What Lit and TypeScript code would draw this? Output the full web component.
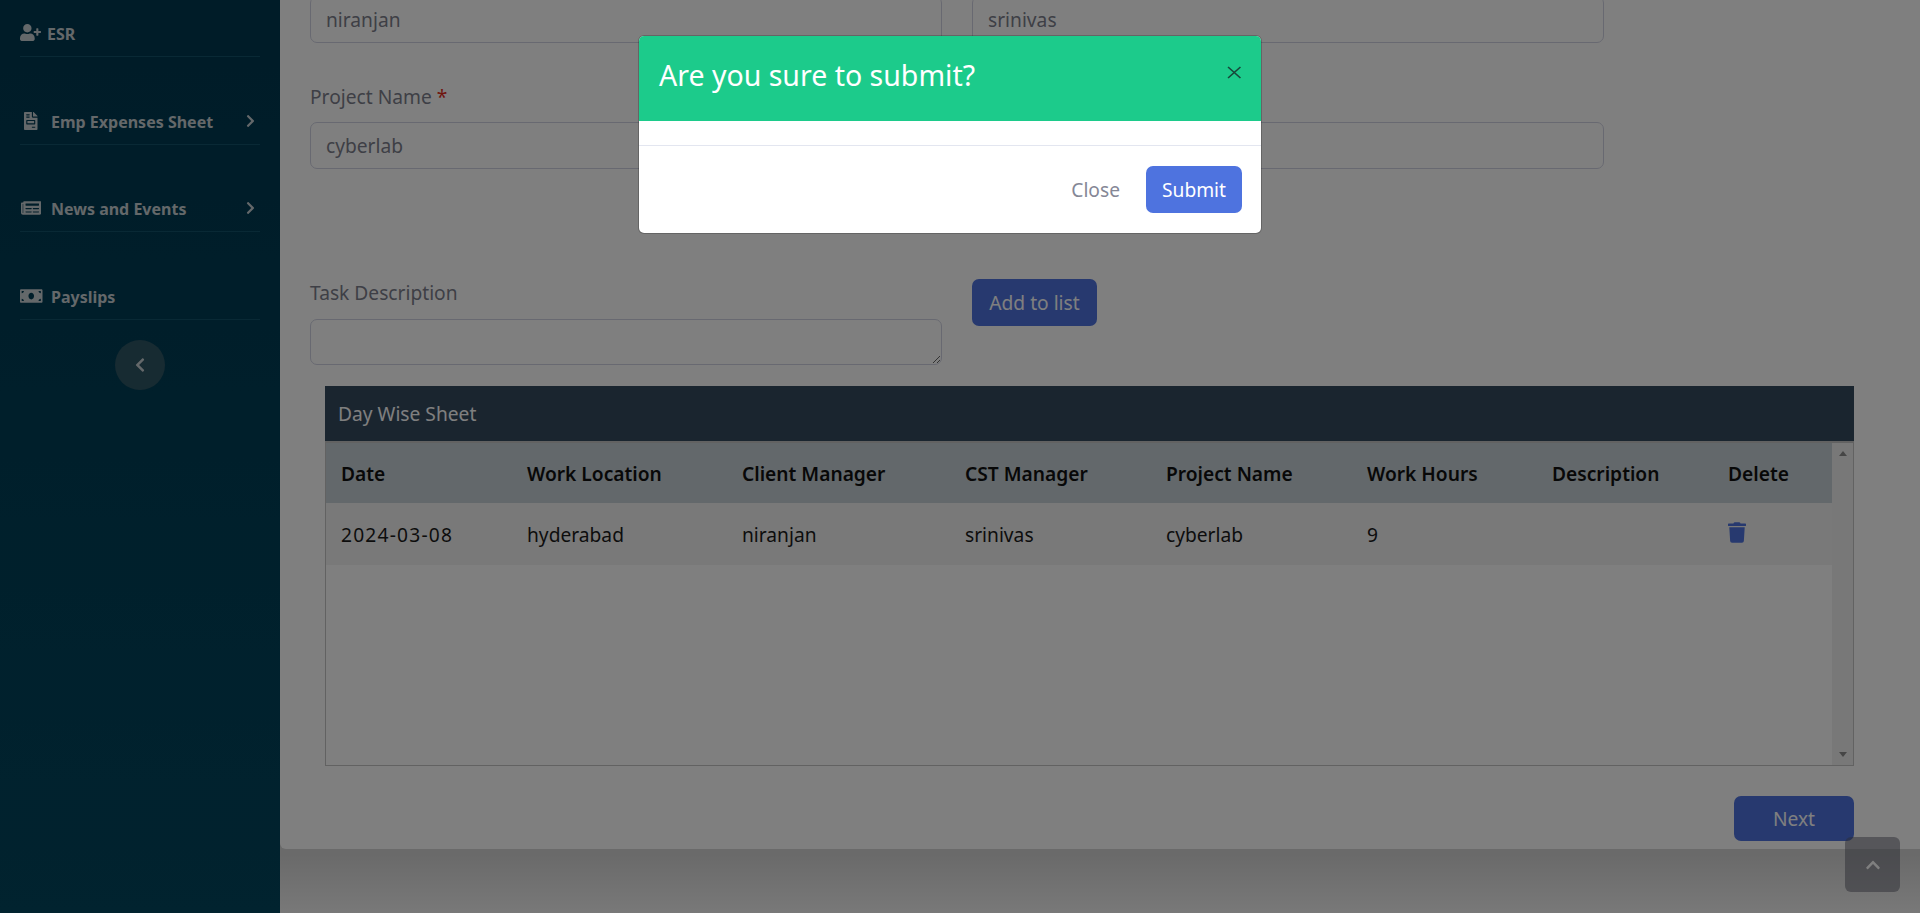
import { LitElement, html, css, svg } from 'lit';
import { customElement } from 'lit/decorators.js';

const chevron = svg`<path d="M285.476 272.971L91.132 467.314c-9.373 9.373-24.569 9.373-33.941 0l-22.667-22.667c-9.357-9.357-9.375-24.522-.04-33.901L188.505 256 34.484 101.255c-9.335-9.379-9.317-24.544.04-33.901l22.667-22.667c9.373-9.373 24.569-9.373 33.941 0L285.475 239.030c9.373 9.372 9.373 24.568.001 33.941z" fill="currentColor"/>`;

const columns = ['Date', 'Work Location', 'Client Manager', 'CST Manager', 'Project Name', 'Work Hours', 'Description', 'Delete'];
const row = ['2024-03-08', 'hyderabad', 'niranjan', 'srinivas', 'cyberlab', '9', ''];

@customElement('app-root')
export class AppRoot extends LitElement {
  static styles = css`
    :host {
      display: block;
      height: 913px;
      overflow: hidden;
      position: relative;
      font-family: 'Noto Sans', 'Open Sans', sans-serif;
      font-size: 19.2px;
      color: #3a3b45;
    }

    .layout {
      display: flex;
      height: 913px;
    }

    /* sidebar */
    .sidebar {
      width: 280px;
      flex: none;
      padding: 0 20px;
      box-sizing: border-box;
      background: linear-gradient(#003850, #02465e);
      color: #c8d0d4;
      font-size: 16px;
      font-weight: 700;
    }
    .nav-item {
      display: flex;
      align-items: center;
      box-sizing: border-box;
      height: 88px;
      padding-top: 43px;
      line-height: 22px;
      border-bottom: 1px solid #12526a;
    }
    .nav-item.first {
      height: 57px;
      padding-top: 12px;
    }
    .nav-item.short {
      height: 87px;
      padding-top: 42px;
    }
    .nav-item .icon {
      height: 18px;
      flex: none;
      margin-bottom: 3px;
    }
    .icon.user {
      width: 21px;
      height: 17px;
      margin-right: 6px;
    }
    .icon.invoice {
      width: 13.5px;
      margin-left: 4px;
      margin-right: 13.5px;
    }
    .icon.news {
      width: 20.25px;
      margin-left: 1px;
      margin-right: 9.75px;
    }
    .icon.bill {
      width: 22.5px;
      margin-right: 8.5px;
    }
    .nav-item .arrow {
      width: 9px;
      height: 14px;
      margin-left: auto;
      margin-right: 5px;
      margin-bottom: 3px;
    }
    .toggle {
      display: flex;
      align-items: center;
      justify-content: center;
      width: 50px;
      height: 50px;
      margin: 20px auto 0;
      border-radius: 50%;
      background: #2f5664;
    }
    .toggle svg {
      width: 10px;
      height: 16px;
      transform: rotate(180deg);
    }

    /* main card */
    .main {
      flex: 1;
      min-width: 0;
      background: linear-gradient(to top, #f2f2f2, #d4d4d4 60px);
    }
    .card {
      height: 853px;
      background: #fff;
      border-radius: 0 0 0 6px;
      padding: 0 30px;
      box-sizing: border-box;
    }
    .fields {
      display: grid;
      grid-template-columns: 632px 632px;
      column-gap: 30px;
      margin-top: -4px;
    }
    .field label {
      display: block;
      margin-bottom: 12px;
      line-height: 26px;
      color: #7d7f8c;
    }
    .req {
      color: #e02d1b;
    }
    .input {
      height: 47px;
      box-sizing: border-box;
      border: 1px solid #d1d3e2;
      border-radius: 7px;
      padding: 0 15px;
      line-height: 45px;
      color: #7d7f8c;
    }
    .row-two {
      margin-top: 41px;
    }
    .task {
      display: grid;
      grid-template-columns: 632px auto;
      column-gap: 30px;
      align-items: start;
      margin-top: 110px;
    }
    .task .field {
      padding-top: 1px;
    }
    .task label {
      margin-bottom: 13px;
    }
    .task textarea {
      display: block;
      width: 100%;
      height: 46px;
      box-sizing: border-box;
      border: 1px solid #d1d3e2;
      border-radius: 7px;
      background: #fff;
      resize: vertical;
      margin: 0;
    }
    .btn {
      font: inherit;
      height: 47px;
      border: none;
      border-radius: 7px;
      background: #4e73df;
      color: #fff;
      padding: 0;
    }
    .add {
      justify-self: start;
      width: 125px;
    }
    .submit {
      width: 96px;
    }

    /* sheet */
    .sheet {
      margin: 21px 36px 0 15px;
    }
    .sheet-title {
      height: 55px;
      background: #344a5f;
      color: #fff;
      line-height: 55px;
      padding: 0 13px;
      box-sizing: border-box;
    }
    .sheet-body {
      display: flex;
      height: 325px;
      box-sizing: border-box;
      border: 1px solid #c4c4c4;
      border-top-width: 2px;
    }
    .grid {
      flex: 1;
      min-width: 0;
    }
    .grid-row {
      display: grid;
      grid-template-columns: 186px 215px 223px 201px 201px 185px 176px auto;
      align-items: center;
      padding: 0 15px;
    }
    .grid-row.head {
      height: 60px;
      background: #c6d0d6;
      color: #111;
      font-weight: 600;
    }
    .grid-row.body {
      height: 62px;
      background: #f2f2f2;
      color: #1b1b1b;
    }
    .date {
      letter-spacing: 1.2px;
    }
    .trash {
      width: 18px;
      height: 21px;
      margin-bottom: 3px;
    }
    .scrollbar {
      width: 21px;
      flex: none;
      background: #f1f1f1;
      display: flex;
      flex-direction: column;
      justify-content: space-between;
      align-items: center;
      padding: 8px 0;
      box-sizing: border-box;
    }
    .scrollbar i {
      width: 0;
      height: 0;
      border-left: 4.5px solid transparent;
      border-right: 4.5px solid transparent;
    }
    .scrollbar i.up {
      border-bottom: 5px solid #8c8c8c;
    }
    .scrollbar i.down {
      border-top: 5px solid #8c8c8c;
    }
    .next-row {
      display: flex;
      justify-content: flex-end;
      margin: 30px 36px 0 0;
    }
    .next {
      width: 120px;
      height: 45px;
    }

    /* overlays */
    .to-top {
      position: absolute;
      right: 20px;
      bottom: 21px;
      width: 55px;
      height: 55px;
      border-radius: 6px;
      background: rgba(90, 92, 105, 0.5);
      display: flex;
      align-items: center;
      justify-content: center;
      color: #fff;
    }
    .to-top svg {
      width: 10px;
      height: 16px;
      transform: rotate(-90deg);
    }
    .backdrop {
      position: absolute;
      inset: 0;
      background: rgba(0, 0, 0, 0.5);
    }
    .modal {
      position: absolute;
      left: 638px;
      top: 35px;
      width: 624px;
      border-radius: 6px;
      background: #fff;
      background-clip: padding-box;
      border: 1px solid rgba(0, 0, 0, 0.2);
      box-sizing: border-box;
    }
    .modal-head {
      height: 85px;
      background: #1ccb8b;
      border-radius: 5px 5px 0 0;
      display: flex;
      justify-content: space-between;
      padding: 0 20px;
      color: #fff;
    }
    .modal-head h5 {
      margin: 0;
      font-size: 28.500px;
      font-weight: 400;
      line-height: 79px;
    }
    .modal-head svg {
      width: 14.500px;
      height: 13px;
      margin-top: 30px;
    }
    .modal-body {
      height: 24px;
      border-bottom: 1px solid #e3e6f0;
    }
    .modal-foot {
      display: flex;
      justify-content: flex-end;
      align-items: center;
      gap: 26px;
      height: 87px;
      padding: 0 19px;
    }
    .modal-foot span {
      color: #858796;
    }
  `;

  render() {
    return html`
      <div class="layout">
        <aside class="sidebar">
          <div class="nav-item first">
            <svg class="icon user" viewBox="0 0 640 512"><path fill="currentColor" d="M624 208h-64v-64c0-8.800-7.200-16-16-16h-32c-8.800 0-16 7.200-16 16v64h-64c-8.800 0-16 7.200-16 16v32c0 8.800 7.200 16 16 16h64v64c0 8.800 7.200 16 16 16h32c8.800 0 16-7.200 16-16v-64h64c8.800 0 16-7.200 16-16v-32c0-8.800-7.200-16-16-16zm-400 48c70.700 0 128-57.300 128-128S294.700 0 224 0 96 57.300 96 128s57.300 128 128 128zm89.600 32h-16.700c-22.200 10.200-46.900 16-72.900 16s-50.600-5.800-72.900-16h-16.700C60.200 288 0 348.200 0 422.400V464c0 26.500 21.500 48 48 48h352c26.500 0 48-21.500 48-48v-41.600c0-74.200-60.200-134.400-134.400-134.400z"/></svg>
            <span>ESR</span>
          </div>
          <div class="nav-item">
            <svg class="icon invoice" viewBox="0 0 384 512"><path fill="currentColor" d="M288 256H96v64h192v-64zm89-151L279.100 7c-4.500-4.500-10.600-7-17-7H256v128h128v-6.100c0-6.300-2.500-12.400-7-16.900zm-153 31V0H24C10.700 0 0 10.700 0 24v464c0 13.300 10.700 24 24 24h336c13.300 0 24-10.700 24-24V160H248c-13.200 0-24-10.800-24-24zM64 72c0-4.420 3.580-8 8-8h80c4.420 0 8 3.580 8 8v16c0 4.420-3.580 8-8 8H72c-4.420 0-8-3.580-8-8V72zm0 64c0-4.420 3.580-8 8-8h80c4.420 0 8 3.580 8 8v16c0 4.420-3.580 8-8 8H72c-4.420 0-8-3.580-8-8v-16zm256 304c0 4.420-3.580 8-8 8h-80c-4.420 0-8-3.580-8-8v-16c0-4.420 3.580-8 8-8h80c4.420 0 8 3.580 8 8v16zm0-200v96c0 8.840-7.160 16-16 16H80c-8.840 0-16-7.160-16-16v-96c0-8.840 7.160-16 16-16h224c8.840 0 16 7.160 16 16z"/></svg>
            <span>Emp Expenses Sheet</span>
            <svg class="arrow" viewBox="0 0 320 512">${chevron}</svg>
          </div>
          <div class="nav-item short">
            <svg class="icon news" viewBox="0 0 576 512"><path fill="currentColor" d="M552 64H88c-13.255 0-24 10.745-24 24v8H24c-13.255 0-24 10.745-24 24v272c0 30.928 25.072 56 56 56h472c26.510 0 48-21.490 48-48V88c0-13.255-10.745-24-24-24zM56 400a8 8 0 0 1-8-8V144h16v248a8 8 0 0 1-8 8zm236-16H140c-6.627 0-12-5.373-12-12v-8c0-6.627 5.373-12 12-12h152c6.627 0 12 5.373 12 12v8c0 6.627-5.373 12-12 12zm208 0H348c-6.627 0-12-5.373-12-12v-8c0-6.627 5.373-12 12-12h152c6.627 0 12 5.373 12 12v8c0 6.627-5.373 12-12 12zm-208-96H140c-6.627 0-12-5.373-12-12v-8c0-6.627 5.373-12 12-12h152c6.627 0 12 5.373 12 12v8c0 6.627-5.373 12-12 12zm208 0H348c-6.627 0-12-5.373-12-12v-8c0-6.627 5.373-12 12-12h152c6.627 0 12 5.373 12 12v8c0 6.627-5.373 12-12 12zm0-96H140c-6.627 0-12-5.373-12-12v-40c0-6.627 5.373-12 12-12h360c6.627 0 12 5.373 12 12v40c0 6.627-5.373 12-12 12z"/></svg>
            <span>News and Events</span>
            <svg class="arrow" viewBox="0 0 320 512">${chevron}</svg>
          </div>
          <div class="nav-item">
            <svg class="icon bill" viewBox="0 0 640 512"><path fill="currentColor" d="M608 64H32C14.330 64 0 78.330 0 96v320c0 17.670 14.330 32 32 32h576c17.670 0 32-14.330 32-32V96c0-17.670-14.330-32-32-32zM48 400v-64c35.350 0 64 28.650 64 64H48zm0-224v-64h64c0 35.350-28.650 64-64 64zm272 176c-44.190 0-80-42.980-80-96 0-53.030 35.820-96 80-96s80 42.970 80 96c0 53.040-35.830 96-80 96zm272 48h-64c0-35.350 28.650-64 64-64v64zm0-224c-35.350 0-64-28.650-64-64h64v64z"/></svg>
            <span>Payslips</span>
          </div>
          <div class="toggle"><svg viewBox="0 0 320 512">${chevron}</svg></div>
        </aside>
        <main class="main">
          <section class="card">
            <div class="fields">
              <div class="field"><div class="input">niranjan</div></div>
              <div class="field"><div class="input">srinivas</div></div>
              <div class="field row-two"><label>Project Name <span class="req">*</span></label><div class="input">cyberlab</div></div>
              <div class="field row-two"><label>&nbsp;</label><div class="input"></div></div>
            </div>
            <div class="task">
              <div class="field"><label>Task Description</label><textarea></textarea></div>
              <button class="btn add">Add to list</button>
            </div>
            <div class="sheet">
              <div class="sheet-title">Day Wise Sheet</div>
              <div class="sheet-body">
                <div class="grid">
                  <div class="grid-row head">${columns.map((c) => html`<div>${c}</div>`)}</div>
                  <div class="grid-row body">
                    ${row.map((c, i) => html`<div class=${i === 0 ? 'date' : ''}>${c}</div>`)}
                    <svg class="trash" viewBox="0 0 448 512"><path fill="#4e73df" d="M432 32H312l-9.400-18.700A24 24 0 0 0 281.100 0H166.800a23.720 23.720 0 0 0-21.400 13.300L136 32H16A16 16 0 0 0 0 48v32a16 16 0 0 0 16 16h416a16 16 0 0 0 16-16V48a16 16 0 0 0-16-16zM53.200 467a48 48 0 0 0 47.900 45h245.800a48 48 0 0 0 47.900-45L416 128H32z"/></svg>
                  </div>
                </div>
                <div class="scrollbar"><i class="up"></i><i class="down"></i></div>
              </div>
            </div>
            <div class="next-row"><button class="btn next">Next</button></div>
          </section>
        </main>
      </div>
      <div class="to-top"><svg viewBox="0 0 320 512">${chevron}</svg></div>
      <div class="backdrop"></div>
      <div class="modal">
        <div class="modal-head">
          <h5>Are you sure to submit?</h5>
          <svg viewBox="0 0 14 14" preserveAspectRatio="none"><path d="M1 1l12 12M13 1L1 13" stroke="#17473a" stroke-width="1.500"/></svg>
        </div>
        <div class="modal-body"></div>
        <div class="modal-foot">
          <span>Close</span>
          <button class="btn submit">Submit</button>
        </div>
      </div>
    `;
  }
}
